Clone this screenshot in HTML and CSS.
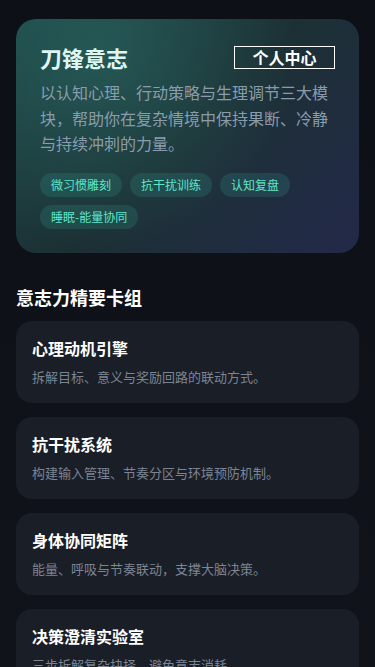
FILE: index.html
```html
<!DOCTYPE html>
<html lang="zh-CN">
<head>
<meta charset="utf-8">
<meta name="viewport" content="width=device-width, initial-scale=1">
<title>刀锋意志</title>
<link rel="stylesheet" href="styles.css">
</head>
<body>
<main class="page">
  <section class="hero">
    <div class="hero-head">
      <h1 class="hero-title">刀锋意志</h1>
      <a class="profile-btn" href="#">个人中心</a>
    </div>
    <p class="hero-desc">以认知心理、行动策略与生理调节三大模块，帮助你在复杂情境中保持果断、冷静与持续冲刺的力量。</p>
    <div class="tags">
      <span class="tag">微习惯雕刻</span>
      <span class="tag">抗干扰训练</span>
      <span class="tag">认知复盘</span>
      <span class="tag">睡眠-能量协同</span>
    </div>
  </section>

  <h2 class="section-title">意志力精要卡组</h2>
  <div class="cards">
    <article class="card">
      <h3 class="card-title">心理动机引擎</h3>
      <p class="card-desc">拆解目标、意义与奖励回路的联动方式。</p>
    </article>
    <article class="card">
      <h3 class="card-title">抗干扰系统</h3>
      <p class="card-desc">构建输入管理、节奏分区与环境预防机制。</p>
    </article>
    <article class="card">
      <h3 class="card-title">身体协同矩阵</h3>
      <p class="card-desc">能量、呼吸与节奏联动，支撑大脑决策。</p>
    </article>
    <article class="card">
      <h3 class="card-title">决策澄清实验室</h3>
      <p class="card-desc">三步拆解复杂抉择，避免意志消耗。</p>
    </article>
  </div>
</main>
</body>
</html>
```

FILE: styles.css
```css
* { box-sizing: border-box; }
html, body {
  margin: 0;
  padding: 0;
  background: #0e1117;
  font-family: "Noto Sans CJK SC", "Noto Sans", "Liberation Sans", sans-serif;
  color: #ffffff;
}
body {
  background: linear-gradient(180deg, #0d1016 0%, #10131a 100%);
  min-height: 100vh;
}
.page {
  padding: 19px 16px 24px;
}
.hero {
  border-radius: 20px;
  padding: 24px;
  background:
    radial-gradient(circle at 25% 15%, rgba(52, 140, 130, 0.35), rgba(52, 140, 130, 0) 60%),
    linear-gradient(135deg, #1d4444 0%, #1c3034 50%, #23294a 100%);
}
.hero-head {
  display: flex;
  align-items: center;
  justify-content: space-between;
  margin-bottom: 8px;
}
.hero-title {
  margin: 0;
  font-size: 22px;
  line-height: 29px;
  font-weight: 700;
  color: #def6f2;
}
.profile-btn {
  display: inline-block;
  flex: none;
  white-space: nowrap;
  border: 1px solid #ffffff;
  color: #ffffff;
  text-decoration: none;
  font-size: 16px;
  font-weight: 700;
  line-height: 21px;
  padding: 0 17.5px;
  text-align: center;
}
.hero-desc {
  margin: 0 0 16px;
  font-size: 16px;
  line-height: 25.6px;
  color: #8a9cac;
}
.tags {
  display: flex;
  flex-wrap: wrap;
  gap: 8px;
}
.tag {
  display: inline-flex;
  align-items: center;
  height: 24px;
  padding: 0 11px;
  border-radius: 999px;
  background: rgba(56, 178, 160, 0.18);
  color: #5ee6cc;
  font-size: 12px;
}
.section-title {
  margin: 32px 0 12px;
  font-size: 18px;
  line-height: 24px;
  font-weight: 700;
  color: #ffffff;
}
.cards {
  display: flex;
  flex-direction: column;
  gap: 14px;
}
.card {
  background: #1a1e27;
  border-radius: 16px;
  padding: 16px;
}
.card-title {
  margin: 0 0 8px;
  font-size: 16px;
  line-height: 22px;
  font-weight: 700;
  color: #ffffff;
}
.card-desc {
  margin: 0;
  font-size: 13px;
  line-height: 20px;
  color: #7b8493;
}
```
